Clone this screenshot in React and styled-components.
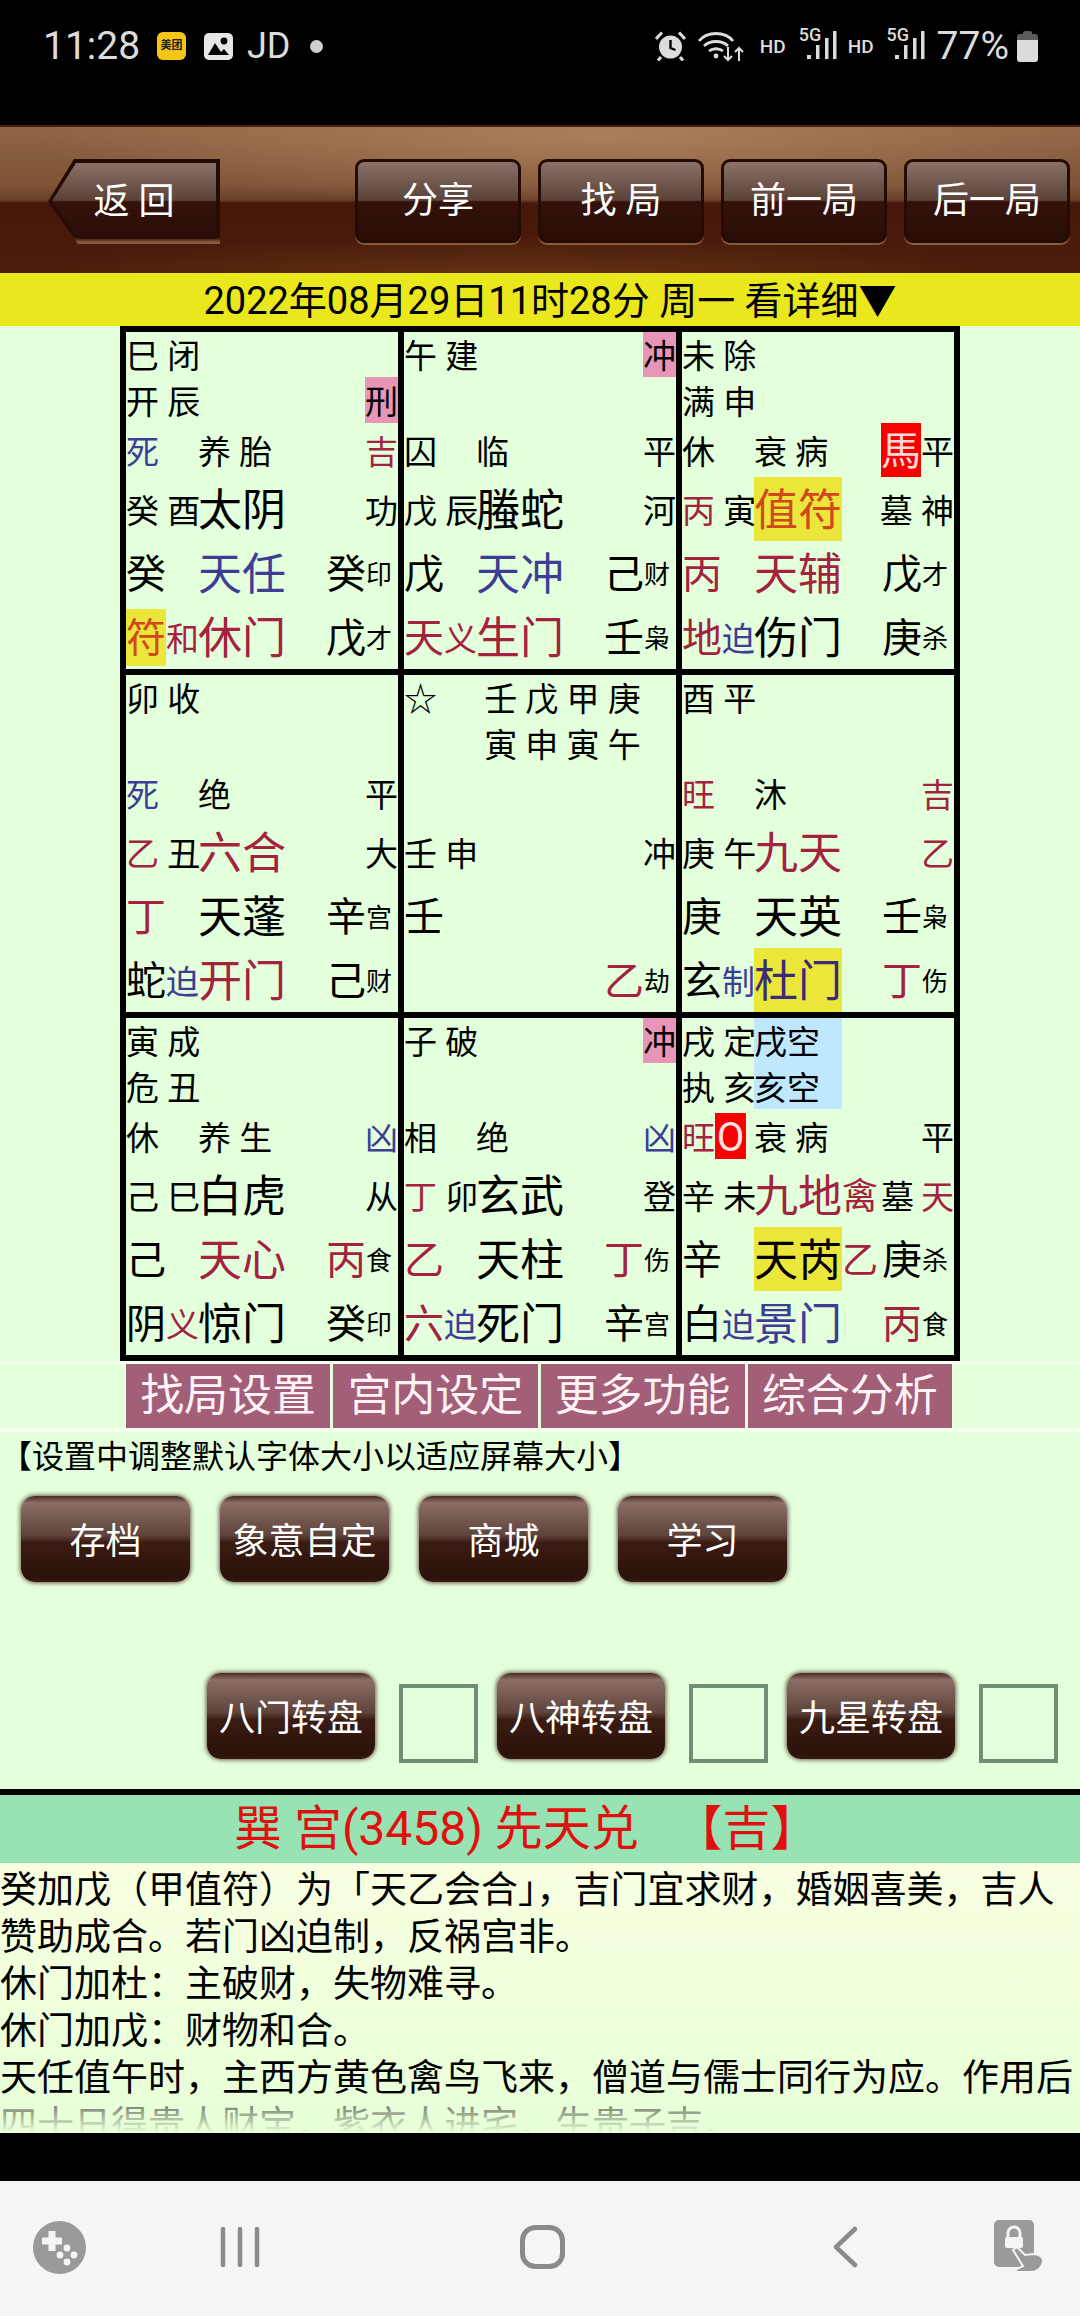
import React from 'react';
import styled, { createGlobalStyle } from 'styled-components';

const RED = '#a3233f';
const BLUE = '#3d3d96';
const ORANGE = '#d2471c';
const YELLOW = '#ebe63a';
const PINK = '#e896b8';
const SKY = '#bfe8ff';
const CRIMSON = '#f70000';

const GlobalStyle = createGlobalStyle`
  html, body { margin: 0; padding: 0; background: #000; }
  body { font-family: Roboto, "Noto Sans CJK SC", sans-serif; }
`;

const Page = styled.div`
  width: 1080px;
  height: 2316px;
  display: flex;
  flex-direction: column;
  overflow: hidden;
  background: #e3ffdb;
`;

/* status bar */
const StatusBar = styled.div`
  height: 125px;
  box-sizing: border-box;
  background: #000;
  padding: 28px 42px 0 43px;
  display: flex;
  justify-content: space-between;
  align-items: flex-start;
  color: #dcdcdc;
`;
const StatusGroup = styled.div`
  height: 36px;
  display: flex;
  align-items: center;
`;
const Clock = styled.span`
  font-size: 39px;
  line-height: 36px;
  width: 114px;
`;
const Carrier = styled.span`
  font-size: 36px;
  line-height: 36px;
  margin-left: 14px;
`;
const Dot = styled.span`
  width: 13px;
  height: 13px;
  border-radius: 50%;
  background: #d0d0d0;
  margin-left: 19px;
`;
const MeituanIcon = styled.span`
  width: 29px;
  height: 28px;
  border-radius: 6px;
  background: #f5c518;
  color: #222;
  font-size: 11px;
  line-height: 28px;
  text-align: center;
  font-weight: 700;
`;
const Hd = styled.span`
  font-size: 19px;
  font-weight: 500;
  margin-left: ${(p) => p.$gap}px;
`;
const Signal = styled.span`
  position: relative;
  width: 38px;
  height: 36px;
  margin-left: 13px;
`;
const SignalLabel = styled.span`
  position: absolute;
  left: 0;
  top: -3px;
  font-size: 18px;
  line-height: 20px;
  font-weight: 500;
`;
const Percent = styled.span`
  font-size: 39px;
  line-height: 36px;
  margin-left: 12px;
`;

/* brown toolbar */
const Toolbar = styled.div`
  height: 148px;
  box-sizing: border-box;
  padding: 32px 9px 0 48px;
  display: flex;
  align-items: flex-start;
  gap: 17px;
  border-top: 2px solid #4a1e0c;
  background:
    radial-gradient(ellipse 560px 70px at 600px 10px, rgba(190, 145, 105, 0.6), transparent),
    radial-gradient(ellipse 500px 40px at 520px 148px, rgba(120, 75, 25, 0.5), transparent),
    linear-gradient(#8f6545 0, #7e5337 40%, #6a4028 50%, #47170a 52%, #4c1c0c 100%);
`;
const BackEdge = styled.div`
  width: 172px;
  height: 85px;
  margin-right: 118px;
  padding: 4px 4px 5px 4px;
  box-sizing: border-box;
  background: linear-gradient(#240a04 0, #2a0c05 92%, #8a5a3c 98%);
  clip-path: polygon(26px 0, 100% 0, 100% 100%, 30px 100%, 0 50%);
`;
const BackFace = styled.div`
  height: 100%;
  display: flex;
  align-items: center;
  justify-content: center;
  padding: 0 0 6px 0;
  box-sizing: border-box;
  color: #fff;
  font-size: 36px;
  white-space: pre;
  clip-path: polygon(24px 0, 100% 0, 100% 100%, 28px 100%, 0 50%);
  background: linear-gradient(#8a7268, #5a4238 49%, #34120a 51%, #2a0e08);
`;
const ToolButton = styled.div`
  width: 160px;
  height: 78px;
  box-sizing: content-box;
  flex: none;
  display: flex;
  align-items: center;
  justify-content: center;
  color: #fff;
  font-size: 36px;
  white-space: pre;
  border-radius: 9px;
  border: 3px solid #260b05;
  box-shadow: 0 2px 0 0 #8a5a3c;
  background: linear-gradient(#8a7268, #5a4238 49%, #34120a 51%, #2a0e08);
`;
const ToolLabel = styled.span`
  margin-top: -8px;
`;

const DateBar = styled.div`
  height: 53px;
  box-sizing: border-box;
  padding: 2px 0 0 20px;
  background: #eae81c;
  color: #000;
  font-size: 38px;
  line-height: 53px;
  text-align: center;
`;

/* the nine palaces */
const Board = styled.div`
  width: 840px;
  margin-left: 120px;
  box-sizing: border-box;
  padding: 6px;
  background: #000;
  display: grid;
  grid-template-columns: 272px 272px 272px;
  grid-auto-rows: 337px;
  gap: 6px;
  flex: none;
`;
const Palace = styled.div`
  background: #e3ffdb;
  display: grid;
  grid-template-rows: 45px 46px 54px 64px 64px 64px;
  color: #000;
  overflow: hidden;
`;
const Row = styled.div`
  display: grid;
  grid-template-columns: 72px 128px 72px;
  min-height: 0;
`;
const Slot = styled.div`
  display: flex;
  align-items: center;
  white-space: pre;
  min-width: 0;
  justify-content: ${(p) => (p.$end ? 'flex-end' : 'flex-start')};
`;
const SIZES = { xs: 26, s: 33, n: 36, m: 40, l: 44 };
const glyphHeight = (p) => {
  if (p.$h) return `${p.$h}px`;
  if (!p.$bg) return 'auto';
  return p.$size === 'm' && !p.$tall ? '57px' : '100%';
};
const Glyph = styled.span`
  flex: none;
  box-sizing: border-box;
  padding-top: 4px;
  font-size: ${(p) => SIZES[p.$size]}px;
  color: ${(p) => p.$color || '#000'};
  background: ${(p) => p.$bg || 'transparent'};
  width: ${(p) => (p.$w ? `${p.$w}px` : 'auto')};
  height: ${glyphHeight};
  display: flex;
  align-items: center;
  justify-content: ${(p) => (p.$center ? 'center' : 'flex-start')};
  line-height: 1;
`;

// [text, size, colour, background, width]
const g = (text, size = 's', color, bg, w) => ({ text, size, color, bg, w });
const big = (text, color) => g(text, 'm', color);
const tiny = (text) => g(text, 'xs');
const lg = (text, color, bg) => g(text, 'l', color, bg);

const PALACES = [
  [
    [[g('巳 闭')]],
    [[g('开 辰')], [], [g('刑', 's', '#000', PINK)]],
    [[g('死', 's', BLUE)], [g('养 胎')], [g('吉', 's', RED)]],
    [[g('癸 酉')], [lg('太阴')], [g('功')]],
    [[big('癸')], [lg('天任', BLUE)], [big('癸'), tiny('印')]],
    [[g('符', 'm', ORANGE, YELLOW), g('和', 's', RED)], [lg('休门', RED)], [big('戊'), tiny('才')]],
  ],
  [
    [[g('午 建')], [], [g('冲', 's', '#000', PINK)]],
    [],
    [[g('囚')], [g('临')], [g('平')]],
    [[g('戊 辰')], [lg('螣蛇')], [g('河')]],
    [[big('戊')], [lg('天冲', BLUE)], [big('己'), tiny('财')]],
    [[big('天', RED), g('义', 's', RED)], [lg('生门', RED)], [big('壬'), tiny('枭')]],
  ],
  [
    [[g('未 除')]],
    [[g('满 申')]],
    [[g('休')], [g('衰 病')], [{ ...g('馬', 'm', '#ffd9d9', CRIMSON), tall: true }, g('平')]],
    [[g('丙', 's', RED), g(' 寅')], [lg('值符', ORANGE, YELLOW)], [g('墓 神')]],
    [[big('丙', RED)], [lg('天辅', RED)], [big('戊'), tiny('才')]],
    [[big('地', RED), g('迫', 's', BLUE)], [lg('伤门')], [big('庚'), tiny('杀')]],
  ],
  [
    [[g('卯 收')]],
    [],
    [[g('死', 's', BLUE)], [g('绝')], [g('平')]],
    [[g('乙', 's', RED), g(' 丑')], [lg('六合', RED)], [g('大')]],
    [[big('丁', RED)], [lg('天蓬')], [big('辛'), tiny('宫')]],
    [[big('蛇'), g('迫', 's', BLUE)], [lg('开门', RED)], [big('己'), tiny('财')]],
  ],
  [
    [[g('☆')], [g('\u00a0壬 戊 甲 庚')]],
    [[], [g('\u00a0寅 申 寅 午')]],
    [],
    [[g('壬 申')], [], [g('冲')]],
    [[big('壬')]],
    [[], [], [big('乙', RED), tiny('劫')]],
  ],
  [
    [[g('酉 平')]],
    [],
    [[g('旺', 's', RED)], [g('沐')], [g('吉', 's', RED)]],
    [[g('庚 午')], [lg('九天', RED)], [g('乙', 's', RED)]],
    [[big('庚')], [lg('天英')], [big('壬'), tiny('枭')]],
    [[big('玄'), g('制', 's', BLUE)], [lg('杜门', '#3a2a78', YELLOW)], [big('丁', RED), tiny('伤')]],
  ],
  [
    [[g('寅 成')]],
    [[g('危 丑')]],
    [[g('休')], [g('养 生')], [g('凶', 's', BLUE)]],
    [[g('己 巳')], [lg('白虎')], [g('从')]],
    [[big('己')], [lg('天心', RED)], [big('丙', RED), tiny('食')]],
    [[big('阴'), g('义', 's', RED)], [lg('惊门')], [big('癸'), tiny('印')]],
  ],
  [
    [[g('子 破')], [], [g('冲', 's', '#000', PINK)]],
    [],
    [[g('相')], [g('绝')], [g('凶', 's', BLUE)]],
    [[g('丁', 's', RED), g(' 卯')], [lg('玄武')], [g('登')]],
    [[big('乙', RED)], [lg('天柱')], [big('丁', RED), tiny('伤')]],
    [[big('六', RED), g('迫', 's', BLUE)], [lg('死门')], [big('辛'), tiny('宫')]],
  ],
  [
    [[g('戌 定')], [g('戌空', 's', '#000', SKY, 88)]],
    [[g('执 亥')], [g('亥空', 's', '#000', SKY, 88)]],
    [[g('旺', 's', RED), g(' '), { ...g('O', 'm', '#ffe4e4', CRIMSON, 31), center: true, h: 46 }], [g('衰 病')], [g('平')]],
    [[g('辛 未')], [lg('九地', RED), g('禽', 'n', RED)], [g('墓', 's', '#000', undefined, 40), g('天', 's', RED)]],
    [[big('辛')], [lg('天芮', '#000', YELLOW), g('乙', 'n', RED)], [big('庚'), tiny('杀')]],
    [[big('白'), g('迫', 's', BLUE)], [lg('景门', BLUE)], [big('丙', RED), tiny('食')]],
  ],
];

function Tokens({ items = [], end }) {
  return (
    <Slot $end={end}>
      {items.map((it, i) => (
        <Glyph key={i} $size={it.size} $color={it.color} $bg={it.bg} $w={it.w} $tall={it.tall} $center={it.center} $h={it.h}>
          {it.text}
        </Glyph>
      ))}
    </Slot>
  );
}

function PalaceCell({ rows }) {
  return (
    <Palace>
      {rows.map((row, i) => {
        const right = row[2] || [];
        const flush = !(right[0] && right[0].size === 'm' && !right[0].tall);
        return (
          <Row key={i}>
            <Tokens items={row[0]} />
            <Tokens items={row[1]} />
            <Tokens items={right} end={flush} />
          </Row>
        );
      })}
    </Palace>
  );
}

/* tabs and setting buttons */
const TabStrip = styled.div`
  height: 64px;
  flex: none;
  padding: 0 128px 0 126px;
  display: flex;
  gap: 3px;
  border-top: 3px solid #f4fff0;
  border-bottom: 4px solid #f4fff0;
`;
const Tab = styled.div`
  flex: 1;
  background: #a35e78;
  color: #fff3f6;
  font-size: 44px;
  line-height: 64px;
  text-align: center;
`;
const Notice = styled.div`
  height: 50px;
  flex: none;
  font-size: 32px;
  line-height: 50px;
  color: #000;
`;
const ButtonRow = styled.div`
  display: flex;
  align-items: flex-start;
  flex: none;
  margin-top: ${(p) => p.$top}px;
  padding-left: ${(p) => p.$left}px;
  gap: ${(p) => p.$gap}px;
`;
const GlossButton = styled.div`
  width: ${(p) => p.$w}px;
  height: 86px;
  flex: none;
  box-sizing: border-box;
  padding-bottom: 3px;
  display: flex;
  align-items: center;
  justify-content: center;
  color: #fff;
  font-size: 36px;
  border-radius: 14px;
  box-shadow: 0 0 4px 1px rgba(70, 35, 25, 0.75);
  background: linear-gradient(#4a2a20 0, #8b6f67 8%, #5e433b 46%, #3a1c12 54%, #2c120a 94%, #341a10 100%);
`;
const Toggle = styled.div`
  width: 79px;
  height: 79px;
  flex: none;
  box-sizing: border-box;
  margin: 11px 19px 0 24px;
  border: 4px solid #6f8f74;
  background: #e3ffdb;
`;

/* reading panel */
const Divider = styled.div`
  height: 6px;
  flex: none;
  margin-top: 26px;
  background: #000;
`;
const ResultTitle = styled.div`
  height: 68px;
  flex: none;
  box-sizing: border-box;
  padding-left: 234px;
  background: #97e3b3;
  color: #e01010;
  font-size: 48px;
  line-height: 68px;
  white-space: pre;
`;
const Reading = styled.div`
  position: relative;
  height: 270px;
  flex: none;
  overflow: hidden;
  padding-top: 4px;
  box-sizing: border-box;
  background: linear-gradient(#f8ffe0, #e6ffd8);
  color: #000;
  font-size: 37px;
  line-height: 47px;
  &::after {
    content: '';
    position: absolute;
    left: 0;
    right: 0;
    bottom: 0;
    height: 40px;
    background: linear-gradient(rgba(232, 255, 216, 0.3), #e8ffd8);
  }
`;
const Para = styled.div``;

const BlackGap = styled.div`
  height: 48px;
  flex: none;
  background: #000;
`;

const NavBar = styled.div`
  flex: 1;
  background: #f5f5f5;
  display: grid;
  grid-template-columns: 118px 244px 360px 246px 106px;
  align-items: center;
  justify-items: center;
  padding-bottom: 3px;
`;

const AlarmIcon = () => (
  <svg width="31" height="30" viewBox="0 0 31 30" style={{ marginRight: 12 }}>
    <circle cx="15.5" cy="16" r="11.5" fill="#dcdcdc" />
    <path d="M15.5 9v8l5 2" stroke="#000" strokeWidth="2.4" fill="none" />
    <path d="M1 8 7 1.5M30 8 24 1.5M6 26l-3 3.5M25 26l3 3.5" stroke="#dcdcdc" strokeWidth="3" />
  </svg>
);
const WifiIcon = () => (
  <svg width="47" height="32" viewBox="0 0 47 32" fill="none" stroke="#dcdcdc" strokeWidth="2.8">
    <path d="M1 11C9 1 27 1 35 11M6 16c6-6 18-6 24 0M11 21c4-3 10-3 14 0" />
    <circle cx="18" cy="26" r="2.4" fill="#dcdcdc" stroke="none" />
    <path d="M30 17v13M26 26l4 4 4-4M41 31V18M37 22l4-4 4 4" strokeWidth="2" />
  </svg>
);
const Bars = () => (
  <svg width="30" height="28" viewBox="0 0 30 28" style={{ position: 'absolute', left: 8, top: 3 }} fill="#dcdcdc">
    <rect x="0" y="24" width="4" height="4" />
    <rect x="9" y="14" width="3.5" height="14" />
    <rect x="18" y="7" width="3.5" height="21" />
    <rect x="26" y="0" width="3.5" height="28" />
  </svg>
);
const GalleryIcon = () => (
  <svg width="29" height="27" viewBox="0 0 29 27" style={{ marginLeft: 18 }}>
    <rect width="29" height="27" rx="5" fill="#e6e6e6" />
    <circle cx="20" cy="8" r="3.4" fill="#000" />
    <path d="M4 22 11 10l6 9 3-3 5 6z" fill="#000" />
  </svg>
);
const BatteryIcon = () => (
  <svg width="21" height="32" viewBox="0 0 21 32" style={{ marginLeft: 8 }}>
    <path d="M6 3a2 2 0 0 1 2-2h5a2 2 0 0 1 2 2v1h3a3 3 0 0 1 3 3v4H0V7a3 3 0 0 1 3-3h3z" fill="#5c5c5c" />
    <path d="M0 10h21v19a3 3 0 0 1-3 3H3a3 3 0 0 1-3-3z" fill="#dcdcdc" />
  </svg>
);
const GameIcon = () => (
  <svg width="53" height="53" viewBox="0 0 53 53">
    <circle cx="26.5" cy="26.5" r="26.5" fill="#9a9a9a" />
    <path d="M15.5 10h7v6.5H29v7h-6.5V30h-7v-6.5H9v-7h6.5z" fill="#f5f5f5" />
    <circle cx="34" cy="27" r="3.4" fill="#f5f5f5" />
    <circle cx="27" cy="34" r="3.4" fill="#f5f5f5" />
    <circle cx="41" cy="34" r="3.4" fill="#f5f5f5" />
    <circle cx="34" cy="41" r="3.4" fill="#f5f5f5" />
  </svg>
);
const RecentsIcon = () => (
  <svg width="40" height="40" viewBox="0 0 40 40" stroke="#8a8a8a" strokeWidth="4.5" strokeLinecap="round">
    <path d="M3 2v36M20 2v36M37 2v36" />
  </svg>
);
const HomeIcon = () => (
  <svg width="45" height="44" viewBox="0 0 45 44" fill="none" stroke="#8a8a8a" strokeWidth="5">
    <rect x="2.5" y="2.5" width="40" height="39" rx="13" />
  </svg>
);
const BackIcon = () => (
  <svg width="25" height="42" viewBox="0 0 25 42" fill="none" stroke="#8a8a8a" strokeWidth="4.5" strokeLinecap="round" strokeLinejoin="round">
    <path d="M22 3 3 21l19 18" />
  </svg>
);
const TouchIcon = () => (
  <svg width="54" height="54" viewBox="0 0 54 54">
    <rect x="0" y="0" width="40" height="47" rx="5" fill="#9a9a9a" />
    <path d="M14 18v-5a6 6 0 0 1 12 0v5" fill="none" stroke="#f5f5f5" strokeWidth="3" />
    <rect x="11" y="17" width="18" height="11" rx="2" fill="#f5f5f5" />
    <path d="M19 30l4-3 8 8 8-1c6 0 11 3 10 8-1 6-6 10-13 10H23l-2-2 8-4z" fill="#9a9a9a" stroke="#f5f5f5" strokeWidth="2" />
  </svg>
);

export default function App() {
  return (
    <Page>
      <GlobalStyle />
      <StatusBar>
        <StatusGroup>
          <Clock>11:28</Clock>
          <MeituanIcon>美团</MeituanIcon>
          <GalleryIcon />
          <Carrier>JD</Carrier>
          <Dot />
        </StatusGroup>
        <StatusGroup>
          <AlarmIcon />
          <WifiIcon />
          <Hd $gap={15}>HD</Hd>
          <Signal><SignalLabel>5G</SignalLabel><Bars /></Signal>
          <Hd $gap={11}>HD</Hd>
          <Signal><SignalLabel>5G</SignalLabel><Bars /></Signal>
          <Percent>77%</Percent>
          <BatteryIcon />
        </StatusGroup>
      </StatusBar>

      <Toolbar>
        <BackEdge><BackFace>返 回</BackFace></BackEdge>
        <ToolButton><ToolLabel>分享</ToolLabel></ToolButton>
        <ToolButton><ToolLabel>找 局</ToolLabel></ToolButton>
        <ToolButton><ToolLabel>前一局</ToolLabel></ToolButton>
        <ToolButton><ToolLabel>后一局</ToolLabel></ToolButton>
      </Toolbar>

      <DateBar>2022年08月29日11时28分 周一 看详细▼</DateBar>

      <Board>
        {PALACES.map((rows, i) => <PalaceCell key={i} rows={rows} />)}
      </Board>

      <TabStrip>
        <Tab>找局设置</Tab>
        <Tab>宫内设定</Tab>
        <Tab>更多功能</Tab>
        <Tab>综合分析</Tab>
      </TabStrip>

      <Notice>【设置中调整默认字体大小以适应屏幕大小】</Notice>

      <ButtonRow $top={14} $left={21} $gap={30}>
        <GlossButton $w={169}>存档</GlossButton>
        <GlossButton $w={169}>象意自定</GlossButton>
        <GlossButton $w={169}>商城</GlossButton>
        <GlossButton $w={169}>学习</GlossButton>
      </ButtonRow>

      <ButtonRow $top={91} $left={207} $gap={0}>
        <GlossButton $w={168}>八门转盘</GlossButton>
        <Toggle />
        <GlossButton $w={168}>八神转盘</GlossButton>
        <Toggle />
        <GlossButton $w={168}>九星转盘</GlossButton>
        <Toggle />
      </ButtonRow>

      <Divider />
      <ResultTitle>巽 宫(3458) 先天兑   【吉】</ResultTitle>
      <Reading>
        <Para>癸加戊（甲值符）为「天乙会合」，吉门宜求财，婚姻喜美，吉人赞助成合。若门凶迫制，反祸宫非。</Para>
        <Para>休门加杜：主破财，失物难寻。</Para>
        <Para>休门加戊：财物和合。</Para>
        <Para>天任值午时，主西方黄色禽鸟飞来，僧道与儒士同行为应。作用后四十日得贵人财宝，紫衣人进宅，生贵子吉。</Para>
      </Reading>
      <BlackGap />

      <NavBar>
        <GameIcon />
        <RecentsIcon />
        <HomeIcon />
        <BackIcon />
        <TouchIcon />
      </NavBar>
    </Page>
  );
}
